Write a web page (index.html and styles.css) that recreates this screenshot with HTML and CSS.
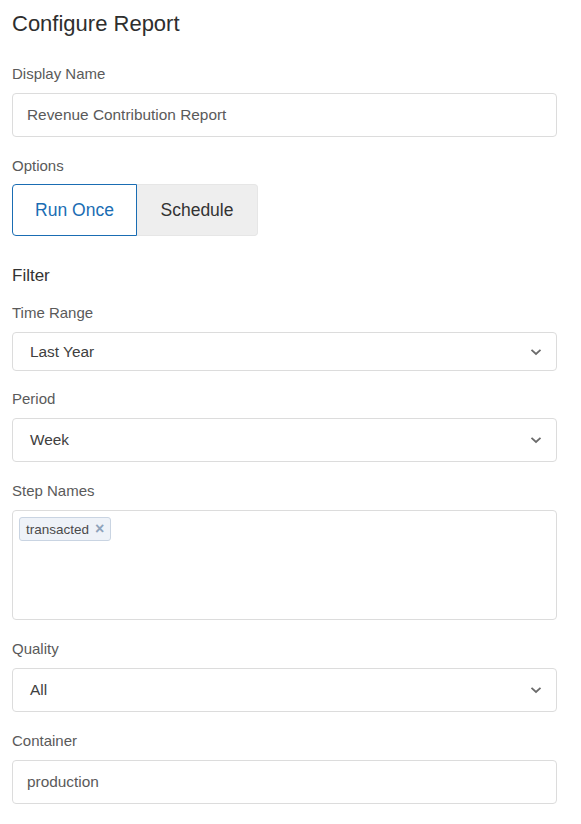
FILE: index.html
```html
<!DOCTYPE html>
<html>
<head>
<meta charset="utf-8">
<link rel="stylesheet" href="styles.css">
</head>
<body>
<div class="page">
  <h1 class="title">Configure Report</h1>

  <div class="field">
    <div class="label">Display Name</div>
    <div class="input">Revenue Contribution Report</div>
  </div>

  <div class="field">
    <div class="label label-tight">Options</div>
    <div class="toggle">
      <div class="toggle-btn active">Run Once</div>
      <div class="toggle-btn">Schedule</div>
    </div>
  </div>

  <div class="section">Filter</div>

  <div class="field">
    <div class="label">Time Range</div>
    <div class="select short"><span>Last Year</span>
      <svg class="chev" width="12" height="8" viewBox="0 0 12 8"><path d="M1.5 1.8 L6 6 L10.5 1.8" fill="none" stroke="#6b6b6b" stroke-width="1.8"/></svg>
    </div>
  </div>

  <div class="field">
    <div class="label">Period</div>
    <div class="select"><span>Week</span>
      <svg class="chev" width="12" height="8" viewBox="0 0 12 8"><path d="M1.5 1.8 L6 6 L10.5 1.8" fill="none" stroke="#6b6b6b" stroke-width="1.8"/></svg>
    </div>
  </div>

  <div class="field">
    <div class="label">Step Names</div>
    <div class="multi">
      <span class="tag">transacted <span class="tag-x">×</span></span>
    </div>
  </div>

  <div class="field">
    <div class="label">Quality</div>
    <div class="select"><span>All</span>
      <svg class="chev" width="12" height="8" viewBox="0 0 12 8"><path d="M1.5 1.8 L6 6 L10.5 1.8" fill="none" stroke="#6b6b6b" stroke-width="1.8"/></svg>
    </div>
  </div>

  <div class="field">
    <div class="label">Container</div>
    <div class="input">production</div>
  </div>
</div>
</body>
</html>
```

FILE: styles.css
```css
* { box-sizing: border-box; }
body {
  margin: 0;
  background: #fff;
  font-family: "Liberation Sans", Arial, Helvetica, sans-serif;
  color: #333;
}
.page {
  width: 545px;
  margin-left: 12px;
  padding-top: 10px;
}
.title {
  margin: 0 0 26px 0;
  font-size: 22px;
  font-weight: normal;
  line-height: 28px;
  color: #2e2e2e;
}
.field {
  margin-bottom: 19px;
}
.label {
  font-size: 15px;
  line-height: 20px;
  color: #5a5a5a;
  margin-bottom: 9px;
}
.label-tight {
  margin-bottom: 8px;
}
.input {
  height: 44px;
  border: 1px solid #dcdcdc;
  border-radius: 4px;
  padding: 0 14px;
  display: flex;
  align-items: center;
  font-size: 15.4px;
  color: #5a5a5a;
}
.toggle {
  display: flex;
  width: 246px;
  height: 52px;
}
.toggle-btn {
  flex: 0 0 auto;
  display: flex;
  align-items: center;
  justify-content: center;
  font-size: 17.5px;
  color: #333;
  background: #eeeeee;
  border: 1px solid #e6e6e6;
  border-left: none;
  border-radius: 0 4px 4px 0;
  width: 121px;
}
.toggle-btn.active {
  width: 125px;
  background: #fff;
  color: #1a6db3;
  border: 1px solid #1a6db3;
  border-radius: 4px 0 0 4px;
}
.section {
  font-size: 17px;
  line-height: 22px;
  color: #333;
  margin-top: 29px;
  margin-bottom: 16px;
}
.select {
  height: 44px;
  border: 1px solid #dcdcdc;
  border-radius: 4px;
  padding: 0 14px 0 17px;
  display: flex;
  align-items: center;
  justify-content: space-between;
  font-size: 15.4px;
  color: #404040;
}
.select.short {
  height: 39px;
  margin-bottom: -1px;
}
.chev {
  display: block;
}
.multi {
  height: 110px;
  border: 1px solid #dcdcdc;
  border-radius: 4px;
  padding: 6px 6px;
  display: flex;
  align-items: flex-start;
}
.tag {
  display: inline-flex;
  align-items: center;
  height: 24px;
  padding: 0 6px;
  border: 1px solid #c9d4e2;
  border-radius: 3px;
  background: #eef2f8;
  font-size: 13.5px;
  color: #4a4a4a;
}
.tag-x {
  margin-left: 6px;
  color: #8fa3bb;
  font-size: 16px;
  font-weight: bold;
}
```
